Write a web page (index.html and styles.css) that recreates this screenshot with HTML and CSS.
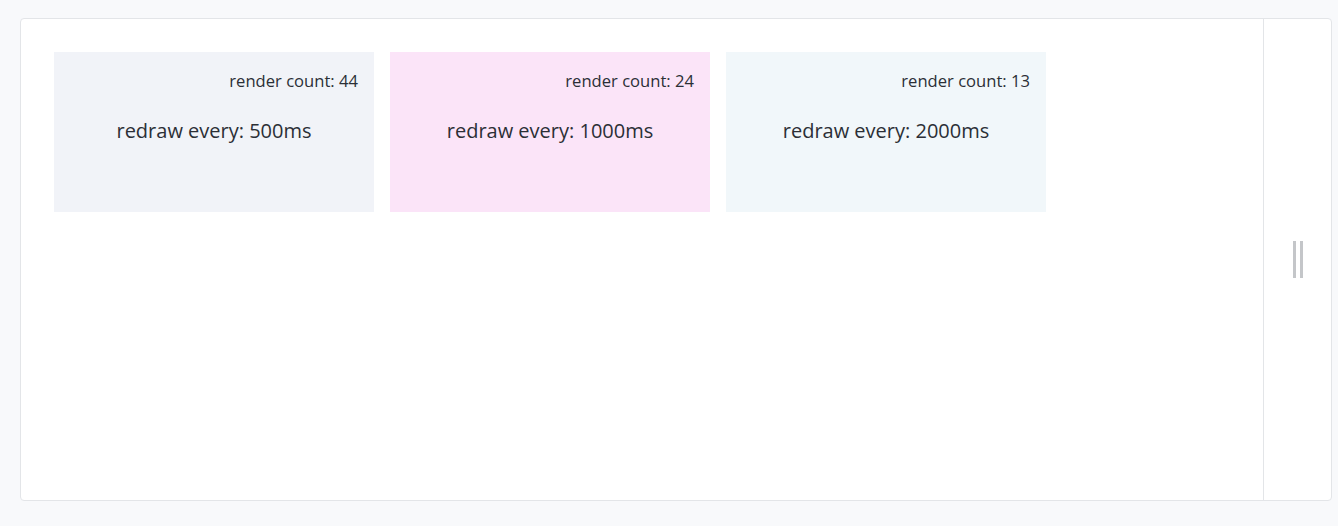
FILE: index.html
```html
<!DOCTYPE html>
<html>
<head>
<meta charset="utf-8">
<link rel="stylesheet" href="styles.css">
</head>
<body>
<div class="frame">
  <div class="canvas">
    <div class="card card-a">
      <div class="count">render count: 44</div>
      <div class="label">redraw every: 500ms</div>
    </div>
    <div class="card card-b">
      <div class="count">render count: 24</div>
      <div class="label">redraw every: 1000ms</div>
    </div>
    <div class="card card-c">
      <div class="count">render count: 13</div>
      <div class="label">redraw every: 2000ms</div>
    </div>
  </div>
  <div class="side">
    <div class="handle"><span></span><span></span></div>
  </div>
</div>
</body>
</html>
```

FILE: styles.css
```css
html, body {
  margin: 0;
  padding: 0;
}
body {
  background: #f8f9fb;
  font-family: "Open Sans", "Noto Sans", sans-serif;
  color: #2b2f36;
  padding: 18px 6px 25px 20px;
  height: 526px;
  box-sizing: border-box;
}
.frame {
  display: flex;
  height: 483px;
  background: #fff;
  border: 1px solid #e3e5e8;
  border-radius: 4px;
  box-sizing: border-box;
}
.canvas {
  flex: 1;
  display: flex;
  align-items: flex-start;
  gap: 16px;
  padding: 33px 0 0 33px;
}
.side {
  width: 67px;
  border-left: 1px solid #e3e5e8;
  display: flex;
  align-items: center;
  justify-content: center;
}
.handle {
  display: flex;
  gap: 4px;
}
.handle span {
  width: 3px;
  height: 37px;
  background: #c4c6c9;
}
.card {
  width: 320px;
  height: 160px;
  box-sizing: border-box;
  padding: 19px 16px 16px;
  display: flex;
  flex-direction: column;
}
.card-a { background: #f1f3f8; }
.card-b { background: #fbe4f8; }
.card-c { background: #f1f7fa; }
.count {
  text-align: right;
  font-size: 16.6px;
  line-height: 20px;
}
.label {
  text-align: center;
  font-size: 20px;
  line-height: 28px;
  margin-top: 26px;
}
```
